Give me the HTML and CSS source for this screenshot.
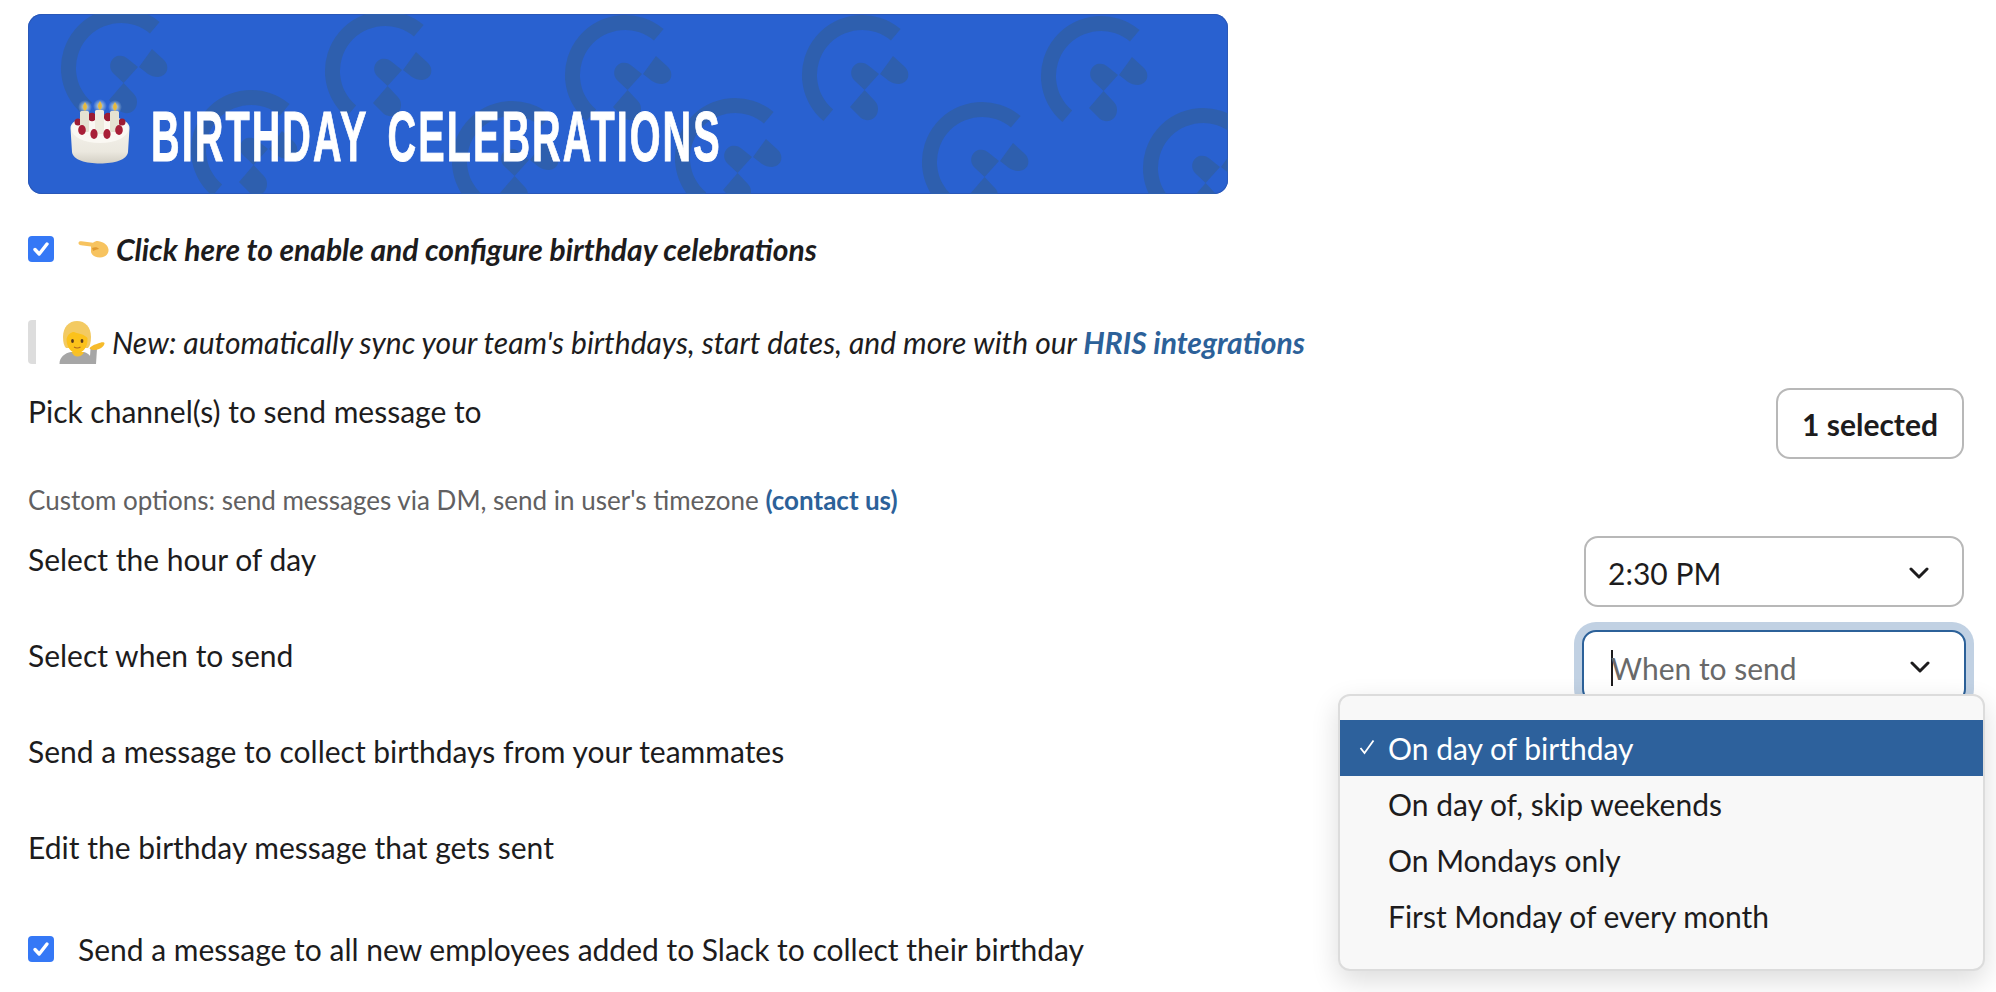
FILE: index.html
```html
<!DOCTYPE html>
<html lang="en">
<head>
<meta charset="utf-8">
<title>Birthday celebrations</title>
<link rel="stylesheet" href="styles.css">
</head>
<body>
<svg class="defs" width="0" height="0" aria-hidden="true">
  <defs>
    <g id="logo">
      <path d="M38.6 -46 A60 60 0 1 0 -38.6 46 L-28.9 34.5 A45 45 0 1 1 28.9 -34.5 Z"/>
      <path d="M18 -1 L31 -19 L43 -8 C49 -2 47 8 37 9 C33 9 30 8 27 6 Z"/>
      <path d="M17 -1 L2.6 15 L-7 6 C-13 1 -12 -9 -4 -12 C0 -13 4 -12 7 -9 Z"/>
      <path d="M2.6 15 L-12 32 L-1 43 C6 48 16 44 16 34 C16 29 14 27 11 24 Z"/>
    </g>
  </defs>
</svg>
<main class="page">
  <header class="banner">
    <svg class="banner-art" viewBox="0 0 1200 180" width="1200" height="180" aria-hidden="true">
      <g class="logos" transform="translate(-28 -14)">
        <use href="#logo" x="121" y="68"/>
        <use href="#logo" x="385" y="71"/>
        <use href="#logo" x="625" y="75"/>
        <use href="#logo" x="862" y="75"/>
        <use href="#logo" x="1101" y="76"/>
        <use href="#logo" x="251" y="150"/>
        <use href="#logo" x="512" y="161"/>
        <use href="#logo" x="735" y="158"/>
        <use href="#logo" x="982" y="162"/>
        <use href="#logo" x="1203" y="168"/>
      </g>
    </svg>
    <svg class="cake" viewBox="0 0 60 66" width="60" height="66" aria-hidden="true">
      <defs>
        <linearGradient id="cakeBody" x1="0" y1="0" x2="0" y2="1">
          <stop offset="0" stop-color="#f8f6f0"/>
          <stop offset="0.75" stop-color="#ebe8df"/>
          <stop offset="1" stop-color="#d3cfc4"/>
        </linearGradient>
        <radialGradient id="glow">
          <stop offset="0" stop-color="#fff3a8" stop-opacity="0.95"/>
          <stop offset="1" stop-color="#bfe0ff" stop-opacity="0"/>
        </radialGradient>
      </defs>
      <path d="M0.5 29 C0.5 21 14 17 30 17 C46 17 59.5 21 59.5 29 L58 53 C57 61 44 64.5 30 64.5 C16 64.5 3 61 2 53 Z" fill="url(#cakeBody)"/>
      <ellipse cx="30" cy="30" rx="28.5" ry="14" fill="#faf8f3"/>
      <circle cx="22" cy="18" r="4.2" fill="#9c1c34"/><circle cx="38" cy="18" r="4.2" fill="#9c1c34"/>
      <circle cx="8" cy="23" r="3.5" fill="#9c1c34"/><circle cx="52" cy="23" r="3.5" fill="#9c1c34"/>
      <circle cx="15" cy="8" r="7" fill="url(#glow)"/><circle cx="30" cy="7" r="7" fill="url(#glow)"/><circle cx="45" cy="8" r="7" fill="url(#glow)"/>
      <rect x="10" y="12" width="9" height="21" rx="1.5" fill="#e5e2d2"/>
      <rect x="25" y="11" width="9" height="24" rx="1.5" fill="#efecdf"/>
      <rect x="40" y="12" width="9" height="21" rx="1.5" fill="#e5e2d2"/>
      <path d="M15 3 C17 6 18 9 15 12 C12 9 13 6 15 3Z M30 2 C32 5 33 8 30 11 C27 8 28 5 30 2Z M45 3 C47 6 48 9 45 12 C42 9 43 6 45 3Z" fill="#e8b93c"/>
      <ellipse cx="12" cy="31" rx="3.8" ry="5" fill="#a81f38"/><ellipse cx="24" cy="35" rx="3.6" ry="5" fill="#a81f38"/>
      <ellipse cx="37" cy="35" rx="3.6" ry="5" fill="#a81f38"/><ellipse cx="49" cy="31" rx="3.8" ry="5" fill="#a81f38"/>
    </svg>
    <h1 class="banner-title"><span class="banner-text">BIRTHDAY CELEBRATIONS</span></h1>
  </header>

  <label class="enable">
    <span class="check"><svg viewBox="0 0 26 26" width="26" height="26" aria-hidden="true"><path d="M7 13.5 L11.2 18 L19 8" class="tick"/></svg></span>
    <svg class="hand" viewBox="0 0 31 18" width="31" height="18" aria-hidden="true">
      <path d="M0.5 3 C0.5 1.5 2 1 3.5 1.3 L15 2.8 C17 1 20 0.5 22 1.5 C26 2.5 30 5 30.5 9.5 C31 14 27 17.5 22 17.5 C17 17.5 14 15.5 13 12 C13 8.5 13 7.5 13 6.5 L3 5.2 C1.5 5 0.5 4.5 0.5 3 Z" fill="#f7c35f"/>
      <path d="M14 8 C16.5 6.5 20 7 21 9 C19 9.5 17 10 15 11 Z" fill="#e09a30"/>
    </svg>
    <em class="enable-text">Click here to enable and configure birthday celebrations</em>
  </label>

  <blockquote class="quote">
    <svg class="person" viewBox="0 0 46 44" width="46" height="44" aria-hidden="true">
      <path d="M0.5 44 C0.5 37 6 33 12 32 L25 32 C28 33 30 34 31 36 L31.5 29 L38 29 L37 44 Z" fill="#a6a6a6"/>
      <path d="M12.5 32 L25 32 C24 35 21 36.5 18.5 36.5 C16 36.5 14 35 12.5 32 Z" fill="#f6c02c"/>
      <path d="M4 17 C4 7 10 1 18 1 C26 1 32 7 32 17 C32 22 31 26 29 28 L7 28 C5 26 4 22 4 17 Z" fill="#f3ca62"/>
      <path d="M7.5 19 C9 14 12 12 15 12 C20 14 25 14 28.5 18 C29 27 24 33 18 33 C12 33 7.5 27 7.5 19 Z" fill="#fcc21b"/>
      <ellipse cx="13.5" cy="21" rx="1.4" ry="2" fill="#5a3a1c"/><ellipse cx="23" cy="21" rx="1.4" ry="2" fill="#5a3a1c"/>
      <path d="M15 27 C17 28.3 19.5 28.3 21.5 27" fill="none" stroke="#b06a1c" stroke-width="1.1"/>
      <path d="M30.5 28.5 C32.5 25 37 24.5 39 23.5 C41 22.5 45 21.5 45.5 23 C45.5 25.5 43 28 40 29 C37 30.5 33 30.5 30.5 28.5 Z" fill="#f6bb2b"/>
    </svg>
    <em class="quote-text">New: automatically sync your team's birthdays, start dates, and more with our <a class="link" href="#">HRIS integrations</a></em>
  </blockquote>

  <section class="row row-channel">
    <p class="label">Pick channel(s) to send message to</p>
    <button class="btn" type="button">1 selected</button>
  </section>

  <p class="context">Custom options: send messages via DM, send in user's timezone <a class="link" href="#">(contact us)</a></p>

  <section class="row row-hour">
    <p class="label">Select the hour of day</p>
    <div class="select">
      <span class="value">2:30 PM</span>
      <svg class="chev" viewBox="0 0 20 12" width="20" height="12" aria-hidden="true"><path d="M2 2 L10 10 L18 2"/></svg>
    </div>
  </section>

  <section class="row row-when">
    <p class="label label-when">Select when to send</p>
    <div class="select select-open">
      <span class="caret"></span>
      <span class="placeholder">When to send</span>
      <svg class="chev" viewBox="0 0 20 12" width="20" height="12" aria-hidden="true"><path d="M2 2 L10 10 L18 2"/></svg>
      <ul class="menu">
        <li class="item item-active">
          <svg class="item-check" viewBox="0 0 16 16" width="16" height="16" aria-hidden="true"><path d="M1.5 9 L5.5 14 L14.5 1.5"/></svg>
          On day of birthday
        </li>
        <li class="item">On day of, skip weekends</li>
        <li class="item">On Mondays only</li>
        <li class="item">First Monday of every month</li>
      </ul>
    </div>
  </section>

  <section class="row row-plain row-collect"><p class="label">Send a message to collect birthdays from your teammates</p></section>
  <section class="row row-plain row-edit"><p class="label">Edit the birthday message that gets sent</p></section>

  <label class="enable enable-last">
    <span class="check"><svg viewBox="0 0 26 26" width="26" height="26" aria-hidden="true"><path d="M7 13.5 L11.2 18 L19 8" class="tick"/></svg></span>
    <span class="enable-label">Send a message to all new employees added to Slack to collect their birthday</span>
  </label>
</main>
</body>
</html>
```
FILE: styles.css
```css
* { box-sizing: border-box; }
html, body { margin: 0; padding: 0; background: #fff; overflow: hidden; height: 100%; }
body { font-family: Lato, "Open Sans", sans-serif; color: #1d1c1d; font-size: 30px; }
.defs { display: block; height: 0; }
.page { padding: 14px 32px 0 28px; }

.banner {
  position: relative; width: 1200px; height: 180px;
  background: #2961d0; border-radius: 14px; overflow: hidden;
  display: flex; align-items: flex-end; padding: 0 0 29px 42px;
  box-shadow: inset 0 0 0 1px #2a58b8;
}
.banner-art { position: absolute; left: 0; top: 0; }
.logos { fill: #2e5fae; }
.cake { position: relative; display: block; flex: none; }
.banner-title { position: relative; margin: 0 0 4px 21px; line-height: 47px; height: 47px; font-size: 70px; font-weight: 700; font-family: "Liberation Sans", sans-serif; color: #fff; white-space: nowrap; }
.banner-text { display: inline-block; transform-origin: 0 50%; transform: scaleX(0.565); letter-spacing: 3.7px; word-spacing: 12px; -webkit-text-stroke: 1px #fff; }

.enable { display: flex; align-items: center; height: 26px; margin-top: 42px; }
.check { width: 26px; height: 26px; border-radius: 4px; background: #3578f6; flex: none; display: block; }
.check svg { display: block; }
.tick { fill: none; stroke: #fff; stroke-width: 3.4; stroke-linecap: round; stroke-linejoin: round; }
.hand { margin-left: 24px; flex: none; }
.enable-text { margin-left: 7px; font-weight: 700; font-style: italic; white-space: nowrap; }
.enable-label { margin-left: 24px; white-space: nowrap; }

.quote { display: flex; align-items: center; height: 44px; margin: 58px 0 0; border-left: 8px solid #ddd; border-radius: 4px; padding-left: 23px; }
.person { flex: none; display: block; }
.quote-text { margin-left: 7px; white-space: nowrap; }
.link { color: #2c6199; font-weight: 700; text-decoration: none; }

.row { display: flex; justify-content: space-between; align-items: flex-start; }
.label { margin: 0; line-height: 46px; white-space: nowrap; }
.label-when { padding-top: 2px; }
.row-channel { margin-top: 24px; height: 71px; }
.btn {
  width: 188px; height: 71px; border: 2px solid #b8b8b8; border-radius: 14px; background: #fff;
  font: 700 30px Lato, sans-serif; color: #1d1c1d; padding: 0;
}
.context { margin: 23px 0 0; font-size: 26px; line-height: 36px; color: #616061; white-space: nowrap; }
.row-hour { margin-top: 18px; height: 71px; }
.select {
  position: relative; width: 380px; height: 71px; border: 2px solid #b8b8b8; border-radius: 14px; background: #fff;
  display: flex; align-items: center; padding: 2px 0 0 22px;
}
.chev { position: absolute; right: 33px; top: 29px; fill: none; stroke: #1d1c1d; stroke-width: 3; stroke-linecap: round; stroke-linejoin: round; }
.row-when { margin-top: 23px; height: 73px; }
.select-open { width: 384px; height: 73px; margin-right: -2px; border-color: #2c6199; box-shadow: 0 0 0 8px #c1d1e3; padding-left: 27px; }
.select-open .chev { right: 34px; top: 29px; }
.caret { width: 2px; height: 36px; background: #1d1c1d; flex: none; margin-top: 0; }
.placeholder { color: #696969; margin-left: -2px; white-space: nowrap; }
.menu {
  position: absolute; z-index: 5; top: 62px; right: -21px; width: 647px; height: 277px;
  margin: 0; padding: 24px 0; list-style: none;
  background: #f8f8f8; border: 2px solid #dcdcdc; border-radius: 12px;
  box-shadow: 0 10px 28px rgba(0,0,0,.14);
}
.item { position: relative; height: 56px; line-height: 56px; padding-left: 48px; white-space: nowrap; }
.item-active { background: #2d619c; color: #fff; }
.item-check { position: absolute; left: 19px; top: 19px; fill: none; stroke: #fff; stroke-width: 1.8; }
.row-plain { height: 46px; }
.row-collect { margin-top: 25px; }
.row-edit { margin-top: 50px; }
.enable-last { margin-top: 66px; }
```
